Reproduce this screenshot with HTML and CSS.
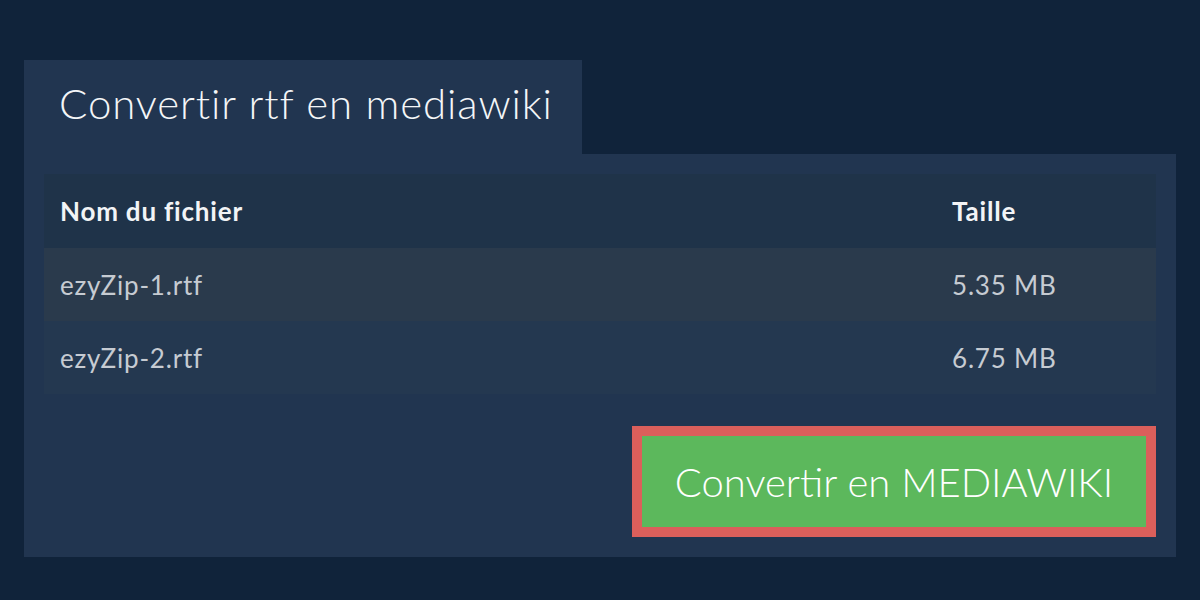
FILE: index.html
```html
<!DOCTYPE html>
<html lang="fr">
<head>
<meta charset="utf-8">
<title>Convertir rtf en mediawiki</title>
<link rel="stylesheet" href="styles.css">
</head>
<body>
<div class="page">
  <div class="tab"><h1 class="title">Convertir rtf en mediawiki</h1></div>
  <div class="panel">
    <table class="files">
      <thead>
        <tr><th class="col-name">Nom du fichier</th><th class="col-size">Taille</th></tr>
      </thead>
      <tbody>
        <tr class="odd"><td class="col-name">ezyZip-1.rtf</td><td class="col-size">5.35 MB</td></tr>
        <tr class="even"><td class="col-name">ezyZip-2.rtf</td><td class="col-size">6.75 MB</td></tr>
      </tbody>
    </table>
    <div class="actions">
      <button class="convert">Convertir en MEDIAWIKI</button>
    </div>
  </div>
</div>
</body>
</html>
```

FILE: styles.css
```css
* { box-sizing: border-box; }
html, body {
  margin: 0;
  padding: 0;
  background: #10233a;
  font-family: Lato, "Open Sans", sans-serif;
}
.page {
  padding: 60px 24px 0 24px;
}
.tab {
  width: 558px;
  height: 94px;
  background: #213550;
  padding: 0 0 0 35px;
  display: flex;
  align-items: center;
}
.title {
  margin: 0;
  margin-top: -8px;
  font-size: 42px;
  font-weight: 300;
  color: #f4f6f8;
  letter-spacing: 0.9px;
}
.panel {
  background: #213550;
  padding: 20px 20px 20px 20px;
}
.files {
  width: 100%;
  border-collapse: collapse;
}
.files th, .files td {
  text-align: left;
  padding: 0 0 0 16px;
}
.files th {
  height: 74px;
  background: #1f3349;
  color: #f2f4f6;
  font-weight: 700;
  font-size: 26px;
  letter-spacing: 0.8px;
}
.files td {
  height: 73px;
  font-size: 26px;
  color: #c6cbd2;
  letter-spacing: 0.8px;
}
.files .col-size { width: 204px; padding-left: 0; }
.odd td { background: #2a3a4c; }
.even td { background: #243850; }
.actions {
  display: flex;
  justify-content: flex-end;
  margin-top: 32px;
}
.convert {
  width: 524px;
  height: 111px;
  background: #5cb85c;
  border: 10px solid #db5f5b;
  color: #ffffff;
  font-family: Lato, sans-serif;
  font-weight: 300;
  font-size: 40px;
  padding: 0;
  cursor: pointer;
}
```
